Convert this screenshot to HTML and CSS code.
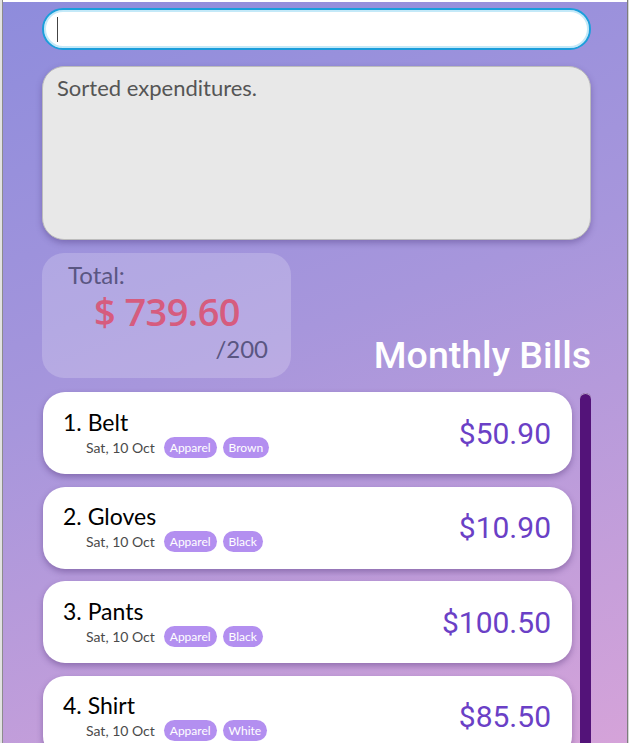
FILE: index.html
```html
<!DOCTYPE html>
<html lang="en">
<head>
<meta charset="utf-8">
<title>Monthly Bills</title>
<link rel="stylesheet" href="styles.css">
</head>
<body>
<div class="frame">
  <div class="edge-left"></div>
  <main class="app">
    <div class="search"><span class="caret"></span></div>
    <div class="note">Sorted expenditures.</div>
    <section class="summary-row">
      <div class="total-card">
        <div class="total-label">Total:</div>
        <div class="total-value">$ 739.60</div>
        <div class="total-limit">/200</div>
      </div>
      <h1 class="title">Monthly Bills</h1>
    </section>
    <section class="list-area">
      <ul class="bills">
        <li class="bill">
          <div class="bill-info">
            <div class="bill-name">1. Belt</div>
            <div class="bill-meta"><span class="bill-date">Sat, 10 Oct</span><span class="tag">Apparel</span><span class="tag">Brown</span></div>
          </div>
          <div class="bill-amount">$50.90</div>
        </li>
        <li class="bill">
          <div class="bill-info">
            <div class="bill-name">2. Gloves</div>
            <div class="bill-meta"><span class="bill-date">Sat, 10 Oct</span><span class="tag">Apparel</span><span class="tag">Black</span></div>
          </div>
          <div class="bill-amount">$10.90</div>
        </li>
        <li class="bill">
          <div class="bill-info">
            <div class="bill-name">3. Pants</div>
            <div class="bill-meta"><span class="bill-date">Sat, 10 Oct</span><span class="tag">Apparel</span><span class="tag">Black</span></div>
          </div>
          <div class="bill-amount">$100.50</div>
        </li>
        <li class="bill">
          <div class="bill-info">
            <div class="bill-name">4. Shirt</div>
            <div class="bill-meta"><span class="bill-date">Sat, 10 Oct</span><span class="tag">Apparel</span><span class="tag">White</span></div>
          </div>
          <div class="bill-amount">$85.50</div>
        </li>
      </ul>
      <div class="scrollbar"></div>
    </section>
  </main>
  <div class="edge-right"></div>
</div>
</body>
</html>
```
FILE: styles.css
```css
* { box-sizing: border-box; }

html, body {
  margin: 0;
  padding: 0;
  height: 743px;
  overflow: hidden;
  background: #ffffff;
}

.frame {
  display: flex;
  height: 743px;
  padding-top: 2px;
  background: #ffffff;
}

.edge-left {
  width: 3px;
  flex: none;
  margin-top: -2px;
  background: linear-gradient(to right, #e2e2e2 0 2px, #8c8c8c 2px 3px);
}

.edge-right {
  width: 2px;
  flex: none;
  margin-top: -2px;
  background: linear-gradient(to right, #7d7d7d 0 1px, #d6d6d6 1px 2px);
}

.app {
  flex: 1;
  display: flex;
  flex-direction: column;
  padding: 6px 36px 0 39px;
  background: linear-gradient(160deg, #8e8cdc 0%, #a796dc 45%, #d5a3d9 100%);
  font-family: Lato, "Open Sans", sans-serif;
  overflow: hidden;
}

.app > * { flex: none; }

.search {
  height: 42px;
  border-radius: 21px;
  background: #ffffff;
  border: 2px solid #1b9edb;
  box-shadow: inset 0 0 0 2px #c4e9f8;
  display: flex;
  align-items: center;
  padding-left: 13px;
}

.caret {
  width: 1px;
  height: 25px;
  background: #444;
}

.note {
  margin-top: 16px;
  height: 174px;
  border-radius: 22px;
  background: #e8e8e8;
  border: 1px solid #bcbcbc;
  box-shadow: 0 3px 6px rgba(60, 40, 110, 0.35);
  padding: 8px 14px;
  font-size: 22px;
  color: #555555;
  line-height: 26px;
}

.summary-row {
  margin-top: 13px;
  height: 125px;
  display: flex;
  justify-content: space-between;
}

.total-card {
  width: 249px;
  border-radius: 22px;
  background: rgba(255, 255, 255, 0.2);
  padding: 8px 23px 0 26px;
  display: flex;
  flex-direction: column;
  color: #5a5682;
}

.total-label {
  font-size: 24px;
  line-height: 28px;
}

.total-value {
  font-family: "Open Sans", sans-serif;
  font-weight: 600;
  font-size: 38px;
  line-height: 42px;
  color: #d65c7e;
  text-align: center;
  margin: 1px 0 0 -2px;
  letter-spacing: -0.6px;
}

.total-limit {
  font-size: 24px;
  line-height: 28px;
  text-align: right;
  margin-top: 3px;
}

.title {
  margin: 0 0 2px 0;
  align-self: flex-end;
  font-family: Roboto, sans-serif;
  font-weight: 500;
  font-size: 37.5px;
  line-height: 42px;
  color: #ffffff;
}

.list-area {
  margin-top: 14px;
  display: flex;
  gap: 8px;
}

.bills {
  list-style: none;
  margin: 0 0 0 1px;
  padding: 0;
  flex: 1;
  display: flex;
  flex-direction: column;
  gap: 12.5px;
}

.bill {
  height: 82px;
  flex: none;
  border-radius: 22px;
  background: #ffffff;
  box-shadow: 0 3px 6px rgba(70, 40, 110, 0.4);
  display: flex;
  align-items: center;
  justify-content: space-between;
  padding: 0 21px 0 20px;
}

.bill-info {
  display: flex;
  flex-direction: column;
}

.bill-name {
  font-size: 23px;
  line-height: 27px;
  color: #000000;
}

.bill-meta {
  display: flex;
  align-items: center;
  gap: 6px;
  margin-left: 23px;
  margin-top: 1px;
}

.bill-date {
  font-size: 14px;
  color: #4a4a4a;
  margin-right: 3px;
}

.tag {
  height: 21px;
  border-radius: 11px;
  background: #b38ff0;
  color: #ffffff;
  font-size: 12px;
  line-height: 21px;
  padding: 0 6px;
}

.bill-amount {
  font-family: Roboto, sans-serif;
  font-size: 30px;
  color: #6a40c6;
}

.scrollbar {
  width: 11px;
  flex: none;
  height: 360px;
  margin-top: 1px;
  border-radius: 6px 6px 0 0;
  background: #531379;
  box-shadow: inset 0 1px 0 #b8a6c8;
}
```
